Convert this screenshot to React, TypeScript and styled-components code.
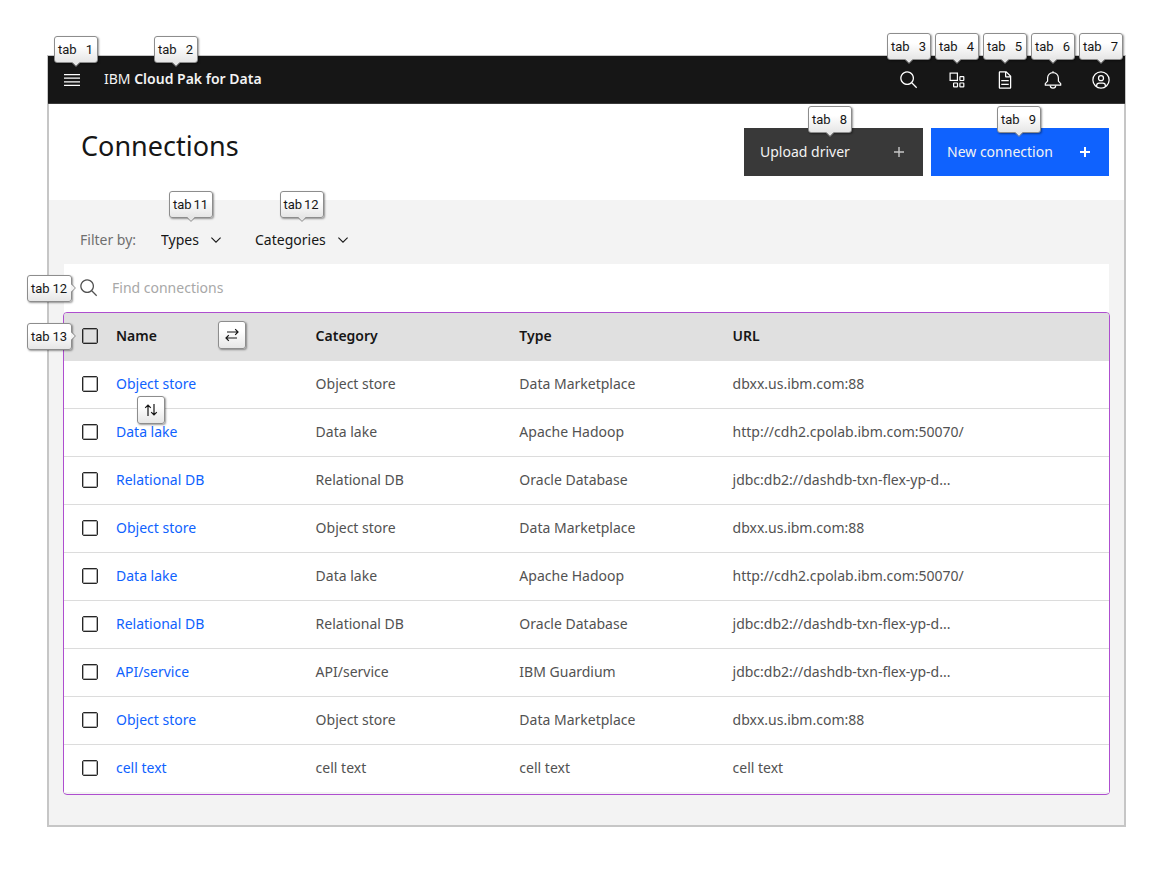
import React from "react";
import styled, { createGlobalStyle, css } from "styled-components";

const GlobalStyle = createGlobalStyle`
  *, *::before, *::after { box-sizing: border-box; }
  body {
    margin: 0;
    background: #ffffff;
    color: #161616;
    font-family: "Noto Sans", "Open Sans", sans-serif;
    font-size: 14px;
    line-height: 20px;
  }
  button, input, select { font: inherit; color: inherit; }
`;

const Page = styled.div`
  padding: 55px 47px 45px;
`;

const Frame = styled.div`
  border: 2px solid #c6c6c6;
  background: #f3f3f3;
`;

const TopBar = styled.header`
  display: flex;
  align-items: center;
  height: 48px;
  margin: -1px -1px 0;
  background: #161616;
  border-bottom: 1px solid #393939;
  color: #ffffff;
`;

const IconButton = styled.button`
  position: relative;
  display: flex;
  align-items: center;
  justify-content: center;
  width: 48px;
  height: 48px;
  padding: 0;
  border: 0;
  background: transparent;
  color: #ffffff;
`;

const Brand = styled.a`
  position: relative;
  height: 48px;
  margin-left: 8px;
  color: #f3f3f3;
  text-decoration: none;
  line-height: 46px;

  strong { font-weight: 600; }
`;

const Actions = styled.nav`
  display: flex;
  margin-left: auto;
`;

const keycap = css`
  background: linear-gradient(#ffffff, #ffffff 35%, #e6e6e6);
  border: 1px solid #8d8d8d;
  border-radius: 3px;
  box-shadow: 1px 1px 2px rgba(0, 0, 0, 0.4);
  color: #161616;
`;

const TagBox = styled.span<{ $side?: boolean; $lift: number; $center: string }>`
  ${keycap}
  position: absolute;
  z-index: 2;
  display: flex;
  align-items: center;
  justify-content: space-between;
  width: ${(p) => (p.$side ? 45 : 44)}px;
  height: 27px;
  padding: 1px 4px 0 3px;
  font-family: Roboto, sans-serif;
  font-size: 13px;
  font-weight: 400;
  line-height: 16px;
  ${(p) =>
    p.$side
      ? css`
          right: 100%;
          top: 50%;
          margin-top: -13px;
          margin-right: ${p.$lift}px;
        `
      : css`
          left: ${p.$center};
          bottom: 100%;
          margin-left: -22px;
          margin-bottom: ${p.$lift}px;
        `}
`;

const Pointer = styled.svg<{ $side?: boolean }>`
  position: absolute;
  ${(p) => (p.$side ? "left: 100%; top: 7px;" : "top: 100%; left: 16px;")}
`;

const KeyBox = styled.span<{ $place: "header" | "between" }>`
  ${keycap}
  position: absolute;
  z-index: 2;
  display: flex;
  align-items: center;
  justify-content: center;
  width: 28px;
  height: 28px;
  ${(p) => (p.$place === "header" ? "left: 102px; top: 8px;" : "left: 21px; top: 22px;")}
`;

const TitleRow = styled.section`
  display: flex;
  justify-content: space-between;
  align-items: flex-start;
  padding: 24px 15px 24px 32px;
  background: #ffffff;
`;

const Title = styled.h1`
  margin: 0;
  font-size: 27px;
  line-height: 36px;
  font-weight: 400;
`;

const ButtonGroup = styled.div`
  display: flex;
  gap: 8px;
`;

const ActionButton = styled.button<{ $primary?: boolean }>`
  position: relative;
  display: flex;
  align-items: center;
  justify-content: space-between;
  width: ${(p) => (p.$primary ? 178 : 179)}px;
  height: 48px;
  padding: 0 16px;
  border: 0;
  background: ${(p) => (p.$primary ? "#0f62fe" : "#393939")};
  color: #f3f3f3;
`;

const Content = styled.main`
  padding: 0 15px 30px;
`;

const Filters = styled.div`
  display: flex;
  align-items: center;
  height: 64px;
  padding: 16px 16px 0;
`;

const FilterLabel = styled.span`
  width: 81px;
  color: #6f6f6f;
`;

const FilterField = styled.label`
  position: relative;
  display: flex;
  align-items: center;
  margin-right: 34px;
`;

const FilterSelect = styled.select`
  appearance: none;
  height: 24px;
  padding: 0 22px 0 0;
  border: 0;
  background: transparent;
  color: #161616;
`;

const Chevron = styled.svg`
  position: absolute;
  right: 0;
  top: 9px;
  pointer-events: none;
`;

const SearchBar = styled.label`
  position: relative;
  display: flex;
  align-items: center;
  gap: 13px;
  height: 48px;
  padding-left: 15px;
  background: #ffffff;
  color: #525252;
`;

const SearchInput = styled.input`
  flex: 1;
  height: 40px;
  padding: 0 0 2px;
  border: 0;
  outline: 0;
  background: transparent;
  color: #161616;

  &::placeholder { color: #a8a8a8; opacity: 1; }
`;

const TableBox = styled.div`
  margin: 0 -1px;
  padding-bottom: 1px;
  border: 1px solid #ae4ecf;
  border-radius: 4px;
`;

const Table = styled.table`
  width: 100%;
  table-layout: fixed;
  border-collapse: separate;
  border-spacing: 0;
  text-align: left;

  th:first-child { border-top-left-radius: 3px; }
  th:last-child { border-top-right-radius: 3px; }
`;

const Col = styled.col<{ $width?: string }>`
  width: ${(p) => p.$width ?? "auto"};
`;

const HeadCell = styled.th`
  position: relative;
  height: 48px;
  padding: 0 0 2px;
  background: #e0e0e0;
  font-weight: 600;
`;

const Cell = styled.td`
  height: 48px;
  padding: 0 0 1px;
  background: #ffffff;
  border-bottom: 1px solid #dcdcdc;
  color: #525252;

  tr:last-child > & { border-bottom-color: #f3f3f3; }
`;

const RowLink = styled.a`
  position: relative;
  display: block;
  color: #0f62fe;
  text-decoration: none;
`;

const Anchor = styled.span`
  position: relative;
  display: block;
`;

const Checkbox = styled.input`
  appearance: none;
  display: block;
  width: 16px;
  height: 16px;
  margin: 0 0 0 18px;
  border: 1px solid #262626;
  border-radius: 2px;
  box-shadow: inset 0 0 0 1px rgba(22, 22, 22, 0.35);
`;

type TagProps = { n: number; side?: boolean; lift?: number; center?: string };

function Tag({ n, side, lift = 0, center = "50%" }: TagProps) {
  return (
    <TagBox $side={side} $lift={lift} $center={center}>
      <span>tab</span>
      <span>{n}</span>
      {side ? (
        <Pointer $side width="5" height="10" viewBox="0 0 5 10" aria-hidden="true">
          <path d="M0 1L4 5L0 9z" fill="#f3f3f3" />
          <path d="M0.5 1L4.4 5L0.5 9" fill="none" stroke="#8d8d8d" />
        </Pointer>
      ) : (
        <Pointer width="10" height="5" viewBox="0 0 10 5" aria-hidden="true">
          <path d="M1 0L5 4L9 0z" fill="#e6e6e6" />
          <path d="M1 0.5L5 4.4L9 0.5" fill="none" stroke="#8d8d8d" />
        </Pointer>
      )}
    </TagBox>
  );
}

function SearchIcon() {
  return (
    <svg width="20" height="20" viewBox="0 0 32 32" fill="currentColor" aria-hidden="true">
      <path d="M29 27.586l-7.552-7.552a11.018 11.018 0 1 0-1.414 1.414L27.586 29zM4 13a9 9 0 1 1 9 9 9.01 9.01 0 0 1-9-9z" />
    </svg>
  );
}

function MenuIcon() {
  return (
    <svg width="20" height="20" viewBox="0 0 20 20" fill="currentColor" aria-hidden="true">
      <path d="M2 14.8h16V16H2zM2 11.2h16v1.2H2zM2 7.6h16v1.2H2zM2 4h16v1.2H2z" />
    </svg>
  );
}

function AppsIcon() {
  return (
    <svg width="20" height="20" viewBox="0 0 20 20" fill="none" stroke="currentColor" strokeWidth="1.2" aria-hidden="true">
      <rect x="3.1" y="3.1" width="7.3" height="7.3" />
      <rect x="12.9" y="6.6" width="3.9" height="3.9" rx="0.5" />
      <rect x="6.6" y="13" width="3.9" height="3.9" rx="0.5" />
      <rect x="12.9" y="13" width="3.9" height="3.9" rx="0.5" />
    </svg>
  );
}

function DocumentIcon() {
  return (
    <svg width="20" height="20" viewBox="0 0 32 32" fill="currentColor" aria-hidden="true">
      <path d="M25.7 9.3l-7-7c-.2-.2-.4-.3-.7-.3H8c-1.1 0-2 .9-2 2v24c0 1.1.9 2 2 2h16c1.1 0 2-.9 2-2V10c0-.3-.1-.5-.3-.7zM18 4.4l5.6 5.6H18V4.4zM24 28H8V4h8v6c0 1.1.9 2 2 2h6v16z" />
      <path d="M10 22h12v2H10zM10 16h12v2H10z" />
    </svg>
  );
}

function BellIcon() {
  return (
    <svg width="20" height="20" viewBox="0 0 20 20" fill="none" stroke="currentColor" strokeWidth="1.2" strokeLinejoin="round" aria-hidden="true">
      <path d="M10 1.2V2.6M10 2.6A5.4 5.4 0 0 0 4.6 8v3.2L2.3 13.6V15.2H17.7V13.6L15.4 11.2V8A5.4 5.4 0 0 0 10 2.6z" />
      <path d="M7.3 15.4a2.7 2.7 0 0 0 5.4 0" />
    </svg>
  );
}

function UserIcon() {
  return (
    <svg width="20" height="20" viewBox="0 0 32 32" fill="currentColor" aria-hidden="true">
      <path d="M16 8a5 5 0 1 0 5 5 5 5 0 0 0-5-5zm0 8a3 3 0 1 1 3-3 3.003 3.003 0 0 1-3 3z" />
      <path d="M16 2a14 14 0 1 0 14 14A14.016 14.016 0 0 0 16 2zm-6 24.377V25a3.003 3.003 0 0 1 3-3h6a3.003 3.003 0 0 1 3 3v1.377a11.899 11.899 0 0 1-12 0zm13.993-1.451A5.002 5.002 0 0 0 19 20h-6a5.002 5.002 0 0 0-4.993 4.926 12 12 0 1 1 15.985 0z" />
    </svg>
  );
}

function PlusIcon({ bold }: { bold?: boolean }) {
  return (
    <svg width="16" height="16" viewBox="0 0 16 16" fill="none" stroke={bold ? "#ffffff" : "#c6c6c6"} strokeWidth={bold ? 2 : 1.4} aria-hidden="true">
      <path d="M8 3v10M3 8h10" />
    </svg>
  );
}

function SwapIcon({ vertical }: { vertical?: boolean }) {
  return (
    <svg width="16" height="16" viewBox="0 0 16 16" fill="none" stroke="#161616" strokeWidth="1.2" aria-hidden="true">
      {vertical ? (
        <path d="M5 14V3M2.2 5.8L5 3L7.8 5.8M11 2V13M8.2 10.2L11 13L13.8 10.2" />
      ) : (
        <path d="M3 5H14M11.2 2.2L14 5L11.2 7.8M13 11H2M4.8 8.2L2 11L4.8 13.8" />
      )}
    </svg>
  );
}

function Filter({ label, n }: { label: string; n: number }) {
  return (
    <FilterField>
      <FilterSelect aria-label={label}>
        <option>{label}</option>
      </FilterSelect>
      <Chevron width="10" height="6" viewBox="0 0 10 6" fill="none" stroke="#161616" strokeWidth="1.1" aria-hidden="true">
        <path d="M0.4 0.6L5 5.2L9.6 0.6" />
      </Chevron>
      <Tag n={n} lift={10} />
    </FilterField>
  );
}

const objectStore = ["Object store", "Data Marketplace", "dbxx.us.ibm.com:88"];
const dataLake = ["Data lake", "Apache Hadoop", "http://cdh2.cpolab.ibm.com:50070/"];
const relational = ["Relational DB", "Oracle Database", "jdbc:db2://dashdb-txn-flex-yp-d..."];
const rows = [
  objectStore,
  dataLake,
  relational,
  objectStore,
  dataLake,
  relational,
  ["API/service", "IBM Guardium", "jdbc:db2://dashdb-txn-flex-yp-d..."],
  objectStore,
  ["cell text", "cell text", "cell text"],
];

const actions = [
  { label: "Search", icon: <SearchIcon /> },
  { label: "Apps", icon: <AppsIcon /> },
  { label: "Documents", icon: <DocumentIcon /> },
  { label: "Notifications", icon: <BellIcon /> },
  { label: "Account", icon: <UserIcon /> },
];

export default function App() {
  return (
    <Page>
      <GlobalStyle />
      <Frame>
        <TopBar>
          <IconButton aria-label="Menu">
            <MenuIcon />
            <Tag n={1} lift={-7} center="28px" />
          </IconButton>
          <Brand href="#">
            IBM <strong>Cloud Pak for Data</strong>
            <Tag n={2} lift={-7} center="72px" />
          </Brand>
          <Actions>
            {actions.map((a, i) => (
              <IconButton key={a.label} aria-label={a.label}>
                {a.icon}
                <Tag n={i + 3} lift={-4} />
              </IconButton>
            ))}
          </Actions>
        </TopBar>
        <TitleRow>
          <Title>Connections</Title>
          <ButtonGroup>
            <ActionButton>
              Upload driver
              <PlusIcon />
              <Tag n={8} lift={-5} center="86px" />
            </ActionButton>
            <ActionButton $primary>
              New connection
              <PlusIcon bold />
              <Tag n={9} lift={-5} center="88px" />
            </ActionButton>
          </ButtonGroup>
        </TitleRow>
        <Content>
          <Filters>
            <FilterLabel>Filter by:</FilterLabel>
            <Filter label="Types" n={11} />
            <Filter label="Categories" n={12} />
          </Filters>
          <SearchBar>
            <SearchIcon />
            <SearchInput type="text" placeholder="Find connections" aria-label="Find connections" />
            <Tag n={12} side lift={-8} />
          </SearchBar>
          <TableBox>
            <Table>
              <colgroup>
                <Col $width="52px" />
                <Col $width="19.1%" />
                <Col $width="19.5%" />
                <Col $width="20.4%" />
                <Col />
              </colgroup>
              <thead>
                <tr>
                  <HeadCell>
                    <Anchor>
                      <Checkbox type="checkbox" aria-label="Select all" />
                      <Tag n={13} side lift={-8} />
                    </Anchor>
                  </HeadCell>
                  <HeadCell>
                    Name
                    <KeyBox $place="header">
                      <SwapIcon />
                    </KeyBox>
                  </HeadCell>
                  <HeadCell>Category</HeadCell>
                  <HeadCell>Type</HeadCell>
                  <HeadCell>URL</HeadCell>
                </tr>
              </thead>
              <tbody>
                {rows.map(([name, type, url], i) => (
                  <tr key={i}>
                    <Cell>
                      <Checkbox type="checkbox" aria-label={`Select ${name}`} />
                    </Cell>
                    <Cell>
                      <RowLink href="#">
                        {name}
                        {i === 0 && (
                          <KeyBox $place="between">
                            <SwapIcon vertical />
                          </KeyBox>
                        )}
                      </RowLink>
                    </Cell>
                    <Cell>{name}</Cell>
                    <Cell>{type}</Cell>
                    <Cell>{url}</Cell>
                  </tr>
                ))}
              </tbody>
            </Table>
          </TableBox>
        </Content>
      </Frame>
    </Page>
  );
}
